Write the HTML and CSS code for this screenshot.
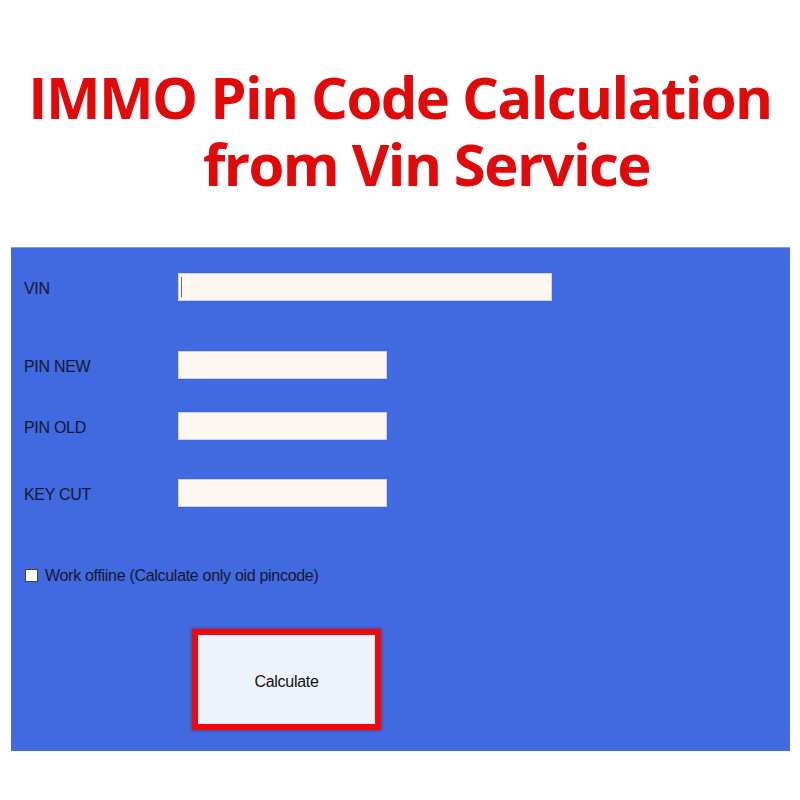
FILE: index.html
```html
<!DOCTYPE html>
<html>
<head>
<meta charset="utf-8">
<link rel="stylesheet" href="styles.css">
</head>
<body>
<header class="title">IMMO Pin Code Calculation<br><span class="line2">from Vin Service</span></header>
<main class="panel">
  <div class="row row-vin">
    <label class="lbl">VIN</label>
    <div class="field field-wide"><span class="caret"></span></div>
  </div>
  <div class="row row-new">
    <label class="lbl">PIN NEW</label>
    <div class="field"></div>
  </div>
  <div class="row row-old">
    <label class="lbl">PIN OLD</label>
    <div class="field"></div>
  </div>
  <div class="row row-key">
    <label class="lbl">KEY CUT</label>
    <div class="field"></div>
  </div>
  <div class="check">
    <span class="box"></span>
    <span class="check-text">Work offiine (Calculate only oid pincode)</span>
  </div>
  <div class="btn-wrap">
    <div class="btn">Calculate</div>
  </div>
</main>
</body>
</html>
```
FILE: styles.css
```css
html, body {
  margin: 0;
  padding: 0;
  background: #ffffff;
}
body {
  width: 800px;
  height: 800px;
  overflow: hidden;
}
.title {
  padding-top: 63px;
  height: 247px;
  box-sizing: border-box;
  font-family: "Open Sans", "Noto Sans", sans-serif;
  font-weight: 700;
  color: #e00a0a;
  font-size: 58px;
  letter-spacing: -1.6px;
  line-height: 67px;
  text-align: center;
}
.line2 {
  padding-left: 53px;
}
.panel {
  margin-left: 11px;
  width: 779px;
  height: 504px;
  background: #4169e0;
  border-top: 1px solid #7d9be8;
  box-sizing: border-box;
  padding-top: 26px;
  font-family: "Liberation Sans", Arial, sans-serif;
  color: #14182e;
}
.row {
  display: flex;
  align-items: center;
  height: 26px;
}
.row-new { margin-top: 52px; }
.row-old { margin-top: 35px; }
.row-key { margin-top: 41px; }
.lbl {
  width: 168px;
  padding-left: 13px;
  padding-top: 4px;
  box-sizing: border-box;
  font-size: 16px;
  letter-spacing: -0.3px;
}
.field {
  width: 207px;
  height: 26px;
  background: #fdf6f1;
  box-shadow: 0 0 0 1px #c9d3ee;
  position: relative;
}
.field-wide {
  width: 372px;
}
.caret {
  position: absolute;
  left: 2px;
  top: 3px;
  width: 1px;
  height: 20px;
  background: #7a6a60;
}
.check {
  margin-top: 62px;
  display: flex;
  align-items: center;
  padding-left: 14px;
  height: 14px;
}
.box {
  width: 11px;
  height: 11px;
  background: #ffffff;
  border: 1px solid #444;
}
.check-text {
  margin-left: 7px;
  padding-top: 2px;
  font-size: 16px;
  letter-spacing: -0.3px;
}
.btn-wrap {
  margin-top: 47px;
  padding-left: 181px;
}
.btn {
  width: 189px;
  height: 101px;
  box-sizing: border-box;
  border: 6px solid #ee0a0a;
  background: #eef3fb;
  display: flex;
  align-items: center;
  justify-content: center;
  padding-top: 4px;
  font-size: 16px;
  letter-spacing: -0.3px;
  color: #111;
  box-shadow: 0 0 3px rgba(120,0,0,0.6);
}
```
